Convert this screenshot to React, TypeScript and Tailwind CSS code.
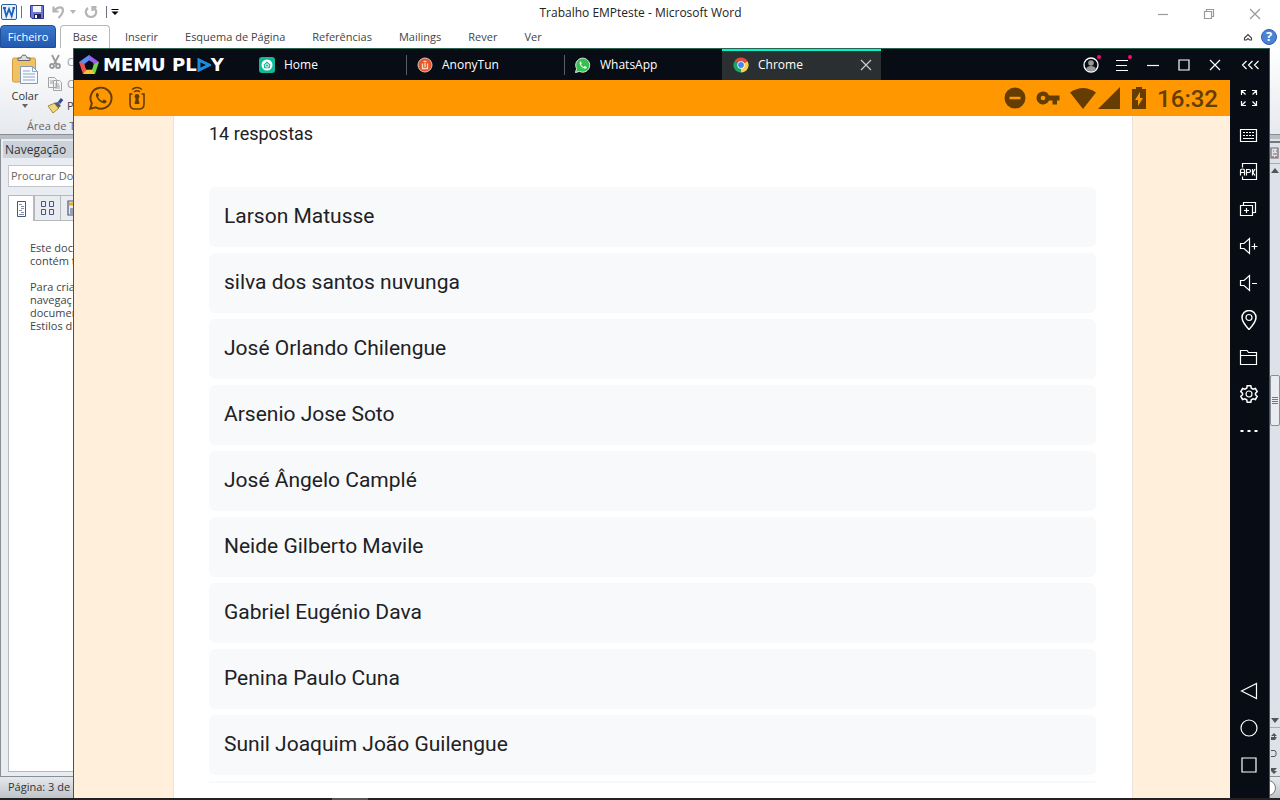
import React from "react";

const responses = [
  "Larson Matusse",
  "silva dos santos nuvunga",
  "José Orlando Chilengue",
  "Arsenio Jose Soto",
  "José Ângelo Camplé",
  "Neide Gilberto Mavile",
  "Gabriel Eugénio Dava",
  "Penina Paulo Cuna",
  "Sunil Joaquim João Guilengue",
];

const ribbonTabs = ["Inserir", "Esquema de Página", "Referências", "Mailings", "Rever", "Ver"];

type IconProps = { children: React.ReactNode; className?: string; box?: string };

function Line({ children, className = "size-5", box = "0 0 20 20" }: IconProps) {
  return (
    <svg viewBox={box} className={className} fill="none" stroke="currentColor" strokeWidth="1.2" aria-hidden="true">
      {children}
    </svg>
  );
}

function QuickAccess() {
  return (
    <div className="flex items-center">
      <svg viewBox="0 0 16 16" className="size-4" aria-hidden="true">
        <rect x="0.5" y="0.5" width="15" height="15" rx="1.5" fill="#e8f1fb" stroke="#2b5f9e" />
        <path d="M2 4h3M11.5 4H14M3.200 4 5.300 12 8 5l2.700 7L12.800 4" fill="none" stroke="#1d63b8" strokeWidth="1.8" />
      </svg>
      <span className="ml-1 h-3 w-px bg-gray-500" />
      <button aria-label="Guardar" className="ml-2">
        <svg viewBox="0 0 14 14" className="size-3.5" aria-hidden="true">
          <path d="M0.5 0.5h13v13H2l-1.5-1.5z" fill="#6d78d8" stroke="#2f3590" />
          <path d="M3 1h8v6H3z" fill="#f1f5fc" />
          <path d="M4 9h7v4H4z" fill="#20254f" />
          <path d="M5 10h2v3H5z" fill="#fff" />
        </svg>
      </button>
      <button aria-label="Anular" className="ml-2">
        <svg viewBox="0 0 14 14" className="size-3.5" fill="none" stroke="#b4b4b4" strokeWidth="2.2" aria-hidden="true">
          <path d="M1.500 1.500v5h5M2 6C6 1 11 1.500 11 5.500c0 3-2 5-4.500 7.500" />
        </svg>
      </button>
      <svg viewBox="0 0 6 4" className="ml-1 h-1 w-1.5" fill="#b4b4b4" aria-hidden="true"><path d="M0 0h6L3 4z" /></svg>
      <button aria-label="Repetir" className="ml-2">
        <svg viewBox="0 0 14 14" className="size-3.5" fill="none" stroke="#b4b4b4" strokeWidth="2.2" aria-hidden="true">
          <path d="M4 3C0 6 2 12 7 12s7-6 3-9M12.500 2H8.500v4" />
        </svg>
      </button>
      <span className="ml-2 h-3 w-px bg-gray-500" />
      <svg viewBox="0 0 7 6" className="ml-1 h-1.5 w-2" aria-hidden="true"><path d="M0 0h7v1H0zM0 2.500h7L3.500 6z" /></svg>
    </div>
  );
}

function WordHeader() {
  return (
    <header className="h-12 shrink-0 text-[#444]">
      <div className="grid h-6 grid-cols-[1fr_auto_1fr] items-center pl-px">
        <QuickAccess />
        <h1 className="pt-0.5 text-[12px] text-[#222]">Trabalho EMPteste - Microsoft Word</h1>
        <div className="flex justify-end gap-[34px] pt-1 pr-[19px] text-[#999]">
          <button aria-label="Minimizar o Word"><Line className="size-3" box="0 0 12 12"><path d="M1 6.500h10" /></Line></button>
          <button aria-label="Restaurar o Word"><Line className="size-3" box="0 0 12 12"><path d="M1.500 3.500h7v7h-7zM3.500 3.500v-2h7v7h-2" /></Line></button>
          <button aria-label="Fechar o Word"><Line className="size-3" box="0 0 12 12"><path d="m1 1 10 10M11 1 1 11" /></Line></button>
        </div>
      </div>
      <nav className="flex h-6 items-stretch pt-px text-[11px]">
        <button className="w-14 rounded-t-sm border border-[#1f4f9c] bg-linear-to-b from-[#3a78cc] to-[#2259b0] pt-px text-white">Ficheiro</button>
        <button className="ml-1 w-[50px] rounded-t-sm border border-b-0 border-[#b5b8bd] bg-white">Base</button>
        <div className="ml-[15px] flex gap-[27px] pt-0.5">
          {ribbonTabs.map((t) => <button key={t}>{t}</button>)}
        </div>
        <div className="ml-auto flex items-center gap-2 pr-[3px]">
          <button aria-label="Minimizar o friso">
            <Line className="size-[10px] text-[#444]" box="0 0 10 10"><path d="M1.500 6 5 2.500 8.500 6v2H6.500L5 6.500 3.500 8h-2z" /></Line>
          </button>
          <button className="size-4 rounded-full border border-[#2c5fb0] bg-[#4a83d4] text-[13px] leading-[13px] font-bold text-white">?</button>
        </div>
      </nav>
    </header>
  );
}

function Ribbon() {
  return (
    <section className="flex h-[87px] shrink-0 flex-col border-b border-[#8a8f96] bg-linear-to-b from-white to-[#e6e9ee]">
      <div className="flex h-[70px] w-[73px] gap-2 overflow-hidden pt-1.5 pl-[11px]">
        <button className="flex shrink-0 flex-col items-center text-[11px] text-[#333]">
          <svg viewBox="0 0 28 32" className="h-8 w-7" aria-hidden="true">
            <rect x="1.5" y="4" width="23" height="24" rx="1.5" fill="#f2c163" stroke="#d29a3e" />
            <path d="M7 6.500V4h3c0-4 6-4 6 0h3v2.500z" fill="#ddd" stroke="#666" />
            <path d="M9.500 12.500h12l5 5v12h-17z" fill="#f6faff" stroke="#8497b4" />
            <path d="M21.500 12.500v5h5M12 17h7M12 20h12M12 23h12M12 26h12" fill="none" stroke="#8fa5c6" />
          </svg>
          <span className="mt-0.5 leading-4">Colar</span>
          <svg viewBox="0 0 6 4" className="h-1 w-1.5" fill="#666" aria-hidden="true"><path d="M0 0h6L3 4z" /></svg>
        </button>
        <div className="flex flex-col gap-1.5 text-[11px] leading-4 text-[#9a9a9a]">
          <button className="flex gap-1">
            <svg viewBox="0 0 16 16" className="size-4" fill="none" stroke="#999" strokeWidth="1.8" aria-hidden="true">
              <path d="m5 1 4.500 9M12 1 7 10" /><circle cx="5" cy="12" r="2" /><circle cx="11" cy="12" r="2" />
            </svg>C
          </button>
          <button className="flex gap-1">
            <svg viewBox="0 0 16 16" className="size-4" fill="#f4f4f4" stroke="#a3a3a3" aria-hidden="true">
              <path d="M1.500 1.500h6l2 2v8h-8zM6.500 4.500h6l2 2v8h-8z" /><path d="M3 5h3M3 7h3M8 8h4M8 10h5M8 12h5" />
            </svg>C
          </button>
          <button className="flex gap-1 text-[#444]">
            <svg viewBox="0 0 16 16" className="size-4" aria-hidden="true">
              <path d="m1 8 7-3 4 5-6 5z" fill="#f1d877" stroke="#a38a42" /><path d="m7 5 4-1 3 4-3 2z" fill="#555d72" /><path d="m12 5 3-4" stroke="#3b4a91" strokeWidth="3" />
            </svg>P
          </button>
        </div>
      </div>
      <p className="pl-[27px] text-[11px] leading-4 text-[#666]">Área de T</p>
    </section>
  );
}

function NavigationPane() {
  return (
    <aside className="flex w-60 flex-col border-l border-[#8a8f96] bg-[#e9ecf1] text-[11px]">
      <h2 className="ml-0.5 mt-0.5 h-[17px] bg-[#ccd2da] pl-0.5 text-[12px] leading-[18px] text-[#333]">Navegação</h2>
      <input aria-label="Procurar Documento" placeholder="Procurar Do" className="mt-[7px] ml-[7px] h-[22px] border border-[#c3c7cd] bg-white px-0.5 pb-0.5 placeholder:text-[#666]" />
      <div className="mt-2 ml-[7px] flex h-[26px] text-[#46597c]">
        <button aria-label="Títulos" className="w-[26px] border border-b-0 border-[#b5b8bd] bg-white pl-[7px]">
          <svg viewBox="0 0 12 16" className="h-4 w-3" fill="none" aria-hidden="true">
            <path d="M1.500.5h8v15h-8z" stroke="#46597c" /><path d="M3 3.500h3M5 5.500h3M5 7.500h3M3 9.500h3M5 11.500h3M3 13.500h5" stroke="#7f8fae" />
          </svg>
        </button>
        <button aria-label="Páginas" className="w-[26px] border-y border-l border-[#b5b8bd] pl-[5px]">
          <svg viewBox="0 0 16 16" className="size-4" fill="none" stroke="currentColor" aria-hidden="true">
            <path d="M1.500 1.500h4v5h-4zM9.500 1.500h4v5h-4zM1.500 9.500h4v5h-4zM9.500 9.500h4v5h-4z" />
          </svg>
        </button>
        <button aria-label="Resultados" className="w-[26px] border border-[#b5b8bd] pl-1.5">
          <Line className="size-4" box="0 0 16 16"><path d="M1 1h12v14H1zM3 9h8M3 11h8M3 13h8" /><path d="M2 4h12" stroke="#e8ab22" strokeWidth="3" /></Line>
        </button>
      </div>
      <div className="mb-1 ml-[7px] grow border-b border-l border-[#b5b8bd] bg-white pt-5 pl-[21px] leading-[13px] whitespace-pre-line text-[#444]">
        {"Este doc\ncontém t\n\nPara cria\nnavegaç\ndocumen\nEstilos d"}
      </div>
    </aside>
  );
}

function WordScrollbar() {
  return (
    <div className="flex w-[11px] flex-col items-center bg-[#dde1e9] text-[#555]">
      <div className="mt-0.5 h-0.5 w-full bg-[#777]" />
      <Line className="mt-1 h-3 w-2.5 text-[#766]" box="0 0 10 12"><path d="M1 1h7v10H1zM3 4h1M6 4h1M3 7h4M3 9v2M6 9v2" /></Line>
      <div className="mt-1 h-px w-full bg-[#aaa]" />
      <svg viewBox="0 0 8 5" className="mt-1 h-[5px] w-2" fill="currentColor" aria-hidden="true"><path d="M4 0 8 5H0z" /></svg>
      <div className="mt-[202px] flex h-[51px] w-[10px] flex-col items-center justify-center gap-px rounded-xs border border-[#888f99] bg-[#e8ebf0]">
        <i className="h-px w-1.5 bg-[#777]" /><i className="h-px w-1.5 bg-[#777]" /><i className="h-px w-1.5 bg-[#777]" /><i className="h-px w-1.5 bg-[#777]" />
      </div>
      <svg viewBox="0 0 8 5" className="mt-auto h-[5px] w-2" fill="currentColor" aria-hidden="true"><path d="M0 0h8L4 5z" /></svg>
      <div className="mt-1 mb-1 h-px w-full bg-[#aaa]" />
      <svg viewBox="0 0 8 44" className="h-11 w-2" aria-hidden="true">
        <path d="M0 5h3V4H0l3-3 3 3H4v1h2L4 8H0zM0 36h6l-3 3h3l-3 3-3-3z" fill="currentColor" />
        <rect x="-3" y="18.500" width="8" height="6" rx="2" fill="none" stroke="currentColor" />
      </svg>
    </div>
  );
}

function MemuLogo() {
  return (
    <div className="flex w-[174px] items-center pl-1">
      <svg viewBox="0 0 22 22" className="size-[22px]" aria-hidden="true">
        <path d="M11 1 1 8l5 4 5-5.500 6 .5z" fill="#5a8cf5" />
        <path d="m11 1 10 7-5 5.500-1-5L11 6.500z" fill="#9b5cf0" />
        <path d="m21 8-4 12-7-4 4-.5 2-5.500z" fill="#6fd24a" />
        <path d="M17 20H5l1-7 2.500 2.500H14z" fill="#f5c52c" />
        <path d="M5 20 1 8l6 1.500-.5 2L8.500 16z" fill="#f0524f" />
        <path d="m11 6.500 4.500 3.500-1.700 5.500H8.200L6.500 10z" fill="#080c14" />
      </svg>
      <span className="ml-[3px] flex items-center font-['DejaVu_Sans'] text-[18px] leading-5 font-bold whitespace-pre text-white">
        MEMU PL
        <svg viewBox="0 0 14 14" className="size-3.5" aria-label="A"><path d="m2 2 10 5-10 5z" fill="none" stroke="#1b8ee0" strokeWidth="3" /></svg>
        Y
      </span>
    </div>
  );
}

const HomeIcon = (
  <svg viewBox="0 0 16 16" className="size-4" aria-hidden="true">
    <rect width="16" height="16" rx="3" fill="#12b898" />
    <circle cx="8" cy="8" r="5.5" fill="#fff" />
    <path d="M8 4.800 11.200 8H10.500v2.800h-5V8H4.800z" fill="#12b898" stroke="#12b898" strokeLinejoin="round" />
    <circle cx="8" cy="8.5" r="1.6" fill="#12b898" stroke="#fff" />
  </svg>
);
const TunIcon = (
  <svg viewBox="0 0 16 16" className="size-4" aria-hidden="true">
    <circle cx="8" cy="8" r="7" fill="#e5562b" stroke="#d9c6bc" />
    <path d="M5.500 6.500v5h5v-5M6.500 4.500h3M8 6v4" fill="none" stroke="#ffd9bd" strokeWidth="1.3" />
  </svg>
);
const phone = "M5.500 4.500c-1 .6-1.200 1.800-.4 3.200 1 1.900 2.300 3 4 3.700 1.300.5 2.200.1 2.500-.7l.1-.8-1.900-.9-.9 1c-1.300-.5-2.200-1.300-2.900-2.600l.7-.9-.7-1.900z";
const WhatsIcon = (
  <svg viewBox="0 0 16 16" className="size-4" aria-hidden="true">
    <path d="M.5 15.500 1.600 11.600A7 7 0 1 1 4.500 14.400z" fill="#32c24d" stroke="#e8e8e8" />
    <path d={phone} fill="#fff" />
  </svg>
);
const ChromeIcon = (
  <svg viewBox="0 0 16 16" className="size-4" aria-hidden="true">
    <path d="M8 8 1.500 4.200a7.500 7.500 0 0 1 13 0z" fill="#dd4b3e" />
    <path d="M8 8 1.500 4.200A7.500 7.500 0 0 0 8 15.500z" fill="#1da362" />
    <path d="M8 8V15.500A7.500 7.500 0 0 0 14.500 4.200z" fill="#fdd04b" />
    <circle cx="8" cy="8" r="3.7" fill="#fff" /><circle cx="8" cy="8" r="2.9" fill="#4285f4" />
  </svg>
);

const appTabs = [
  { name: "Home", icon: HomeIcon },
  { name: "AnonyTun", icon: TunIcon },
  { name: "WhatsApp", icon: WhatsIcon },
];

function TitleBar() {
  return (
    <div className="flex h-[31px] shrink-0 text-white">
      <MemuLogo />
      {appTabs.map((tab, i) => (
        <div key={tab.name} className="flex w-[158px] items-center">
          <span className={i === 0 ? "w-px" : "h-5 w-px bg-[#5a5f64]"} />
          <button className="flex items-center gap-[9px] pl-[10px] text-[12px]">{tab.icon}{tab.name}</button>
        </div>
      ))}
      <div className="flex w-[159px] items-center justify-between border-t-2 border-[#00f5c8] bg-[#2a2f32] pr-[9px] pb-0.5 pl-[11px]">
        <button className="flex items-center gap-[9px] text-[12px]">{ChromeIcon}Chrome</button>
        <button aria-label="Fechar Chrome" className="text-[#ccc]"><Line className="size-3" box="0 0 12 12"><path d="m1 1 10 10M11 1 1 11" /></Line></button>
      </div>
      <div className="ml-auto grid grid-cols-[repeat(5,31px)_39px] place-items-center">
        <button aria-label="Conta" className="relative">
          <svg viewBox="0 0 16 16" className="size-4" aria-hidden="true"><circle cx="8" cy="8" r="7" fill="#080c14" stroke="#fff" strokeWidth="1.3" /><circle cx="8" cy="6" r="2.8" fill="#999" /><path d="M3 12c1-4 9-4 10 0-2 3-8 3-10 0z" fill="#999" /></svg>
          <i className="absolute -top-0.5 -right-0.5 size-1 rounded-full bg-[#ff0a6c]" />
        </button>
        <button aria-label="Menu" className="relative">
          <Line className="size-4" box="0 0 16 16"><path d="M2 3.500h12M2 8.500h11M2 13.500h12" /></Line>
          <i className="absolute -top-0.5 -right-0.5 size-1 rounded-full bg-[#ff0a6c]" />
        </button>
        <button aria-label="Minimizar"><Line className="size-3" box="0 0 12 12"><path d="M0 6.500h12" /></Line></button>
        <button aria-label="Maximizar"><Line className="size-3" box="0 0 12 12"><path d="M1 1h10v10H1z" /></Line></button>
        <button aria-label="Fechar"><Line className="size-3" box="0 0 12 12"><path d="m1 1 10 10M11 1 1 11" /></Line></button>
        <button aria-label="Recolher barra"><Line className="h-2.5 w-[18px]" box="0 0 18 10"><path d="M5.500 1 1.500 5l4 4M11.500 1l-4 4 4 4M17.500 1l-4 4 4 4" /></Line></button>
      </div>
    </div>
  );
}

function AndroidStatus() {
  return (
    <div className="flex h-9 shrink-0 items-center bg-[#ff9800] pr-3 pl-[15px] text-[#663d00]">
      <svg viewBox="0 0 16 16" className="size-6" fill="none" stroke="currentColor" strokeWidth="1.3" aria-hidden="true">
        <path d="M.8 15.200 1.900 11.500A7 7 0 1 1 4.600 14.200z" /><path d={phone} fill="currentColor" stroke="none" />
      </svg>
      <svg viewBox="0 0 18 24" className="ml-[15px] h-6 w-[18px]" fill="none" stroke="currentColor" strokeWidth="1.6" aria-hidden="true">
        <path d="M4.500 8H2v10q0 5 5 5h4q5 0 5-5V8h-2.500M4 3.500q5-4 10 0M6 6q3-2.500 6 0" />
        <circle cx="9" cy="10.5" r="2.4" fill="currentColor" stroke="none" /><path d="M8 11h2l1.500 7h-5z" fill="currentColor" stroke="none" />
      </svg>
      <div className="ml-auto flex items-center">
        <svg viewBox="0 0 22 22" className="size-[22px]" fill="currentColor" aria-hidden="true"><path fillRule="evenodd" d="M11 .5a10.500 10.500 0 1 0 0 21 10.500 10.500 0 0 0 0-21zM5.500 9.700h11v2.600h-11z" /></svg>
        <svg viewBox="0 0 24 14" className="ml-2.5 h-3.5 w-6" fill="currentColor" aria-hidden="true"><path fillRule="evenodd" d="M7 .5a6.500 6.500 0 1 0 6 9h3.500v4H21v-4h2.500v-5H13a6.500 6.500 0 0 0-6-4zm0 4.200a2.300 2.300 0 1 1 0 4.600 2.300 2.300 0 0 1 0-4.600z" /></svg>
        <svg viewBox="0 0 26 21" className="ml-2.5 h-[21px] w-[26px]" fill="currentColor" aria-hidden="true"><path d="M0 4.500q13-9 26 0L13 21z" /></svg>
        <svg viewBox="0 0 22 22" className="ml-0.5 size-[22px]" fill="currentColor" aria-hidden="true"><path d="M22 0v22H0z" /></svg>
        <svg viewBox="0 0 14 22" className="ml-3 h-[22px] w-3.5" fill="currentColor" aria-hidden="true"><path fillRule="evenodd" d="M4 0h6v2h4v20H0V2h4zM8 5 3 13h3v6l5-8H8z" /></svg>
        <time className="ml-[11px] pt-0.5 font-[Roboto] text-[24px] leading-9 font-medium">16:32</time>
      </div>
    </div>
  );
}

const sideTools = [
  { label: "Ecrã inteiro", art: <path d="M2.500 7V2.500H7M2.500 2.500l4 4M13 2.500h4.500V7M17.500 2.500l-4 4M2.500 13v4.500H7M2.500 17.500l4-4M17.500 13v4.500H13M17.500 17.500l-4-4" /> },
  { label: "Teclado", art: <path d="M1.500 4.500h16v12h-16zM4 7.500h2M7 7.500h2M10 7.500h2M13 7.500h2M4 10.500h2M7 10.500h2M10 10.500h2M13 10.500h2M4 13.500h11" /> },
  { label: "Instalar APK", art: <path d="M3.500 5.500v-4h14v16h-14v-3M1.500 13.500V9q0-2 2-2t2 2v4.500M1.500 10.500h4M7.500 13.500v-6H10q1.500 0 1.500 1.500T10 10.500H7.500M13.500 7v6.500M16 7l-2 3.500 2 3" /> },
  { label: "Múltiplas instâncias", art: <path d="M1.500 6.500h12v10h-12zM4.500 6.500v-3h12v10h-3M7.500 9v5M5 11.500h5" /> },
  { label: "Aumentar volume", art: <path d="M1.500 7.500H5l5.500-5v15L5 12.500H1.500zM12.500 10.500h6M15.500 7.500v6" /> },
  { label: "Diminuir volume", art: <path d="M1.500 7.500H5l5.500-5v15L5 12.500H1.500zM13 10.500h5" /> },
  { label: "Localização", art: <><path d="M10 19.500Q3 12 3 7.500a7 7 0 0 1 14 0Q17 12 10 19.500z" strokeWidth="1.5" /><circle cx="10" cy="7.5" r="3" /></> },
  { label: "Ficheiros", art: <path d="M1.500 17.500v-14H8l1.500 2h8v12zM1.500 8.500h16" /> },
  { label: "Definições", art: <><path strokeWidth="1.5" d="M8.200 1.800h3.600l.5 2.400 1.800 1 2.300-.7 1.800 3.100-1.700 1.700v1.400l1.700 1.700-1.800 3.100-2.300-.7-1.800 1-.5 2.400H8.200l-.5-2.400-1.800-1-2.300.7-1.800-3.100 1.700-1.700V9.300L1.800 7.600l1.800-3.100 2.300.7 1.800-1z" /><circle cx="10" cy="10" r="3" /></> },
  { label: "Mais", art: <path d="M1.500 10h3M8.500 10h3M15.500 10h3" strokeWidth="2" /> },
];

const systemKeys = [
  { label: "Voltar", art: <path d="M2.500 10 17.500 2.500v15z" /> },
  { label: "Início", art: <circle cx="10" cy="10" r="8" /> },
  { label: "Recentes", art: <path d="M3 3h14v14H3z" /> },
];

function ToolSidebar() {
  return (
    <div className="flex w-[39px] shrink-0 flex-col justify-between pr-px pb-3.5 text-white">
      <div className="flex flex-col">
        {sideTools.map((t) => <button key={t.label} aria-label={t.label} className="flex h-[37px] items-center justify-center pb-px"><Line>{t.art}</Line></button>)}
      </div>
      <div className="flex flex-col">
        {systemKeys.map((t) => <button key={t.label} aria-label={t.label} className="flex h-[37px] items-center justify-center pb-px"><Line>{t.art}</Line></button>)}
      </div>
    </div>
  );
}

function EmulatorWindow() {
  return (
    <div className="absolute top-12 right-[10px] bottom-0.5 left-[73px] flex flex-col border border-b-0 border-[#2c6350] bg-[#080c14]">
      <TitleBar />
      <div className="flex min-h-0 grow">
        <div className="flex min-w-0 grow flex-col">
          <AndroidStatus />
          <main className="min-h-0 grow overflow-hidden bg-[#ffefdb] pr-[97px] pl-[99px] font-[Roboto] text-[#202124]">
            <section className="h-full border-x border-[#ebe3da] bg-white pr-9 pl-[35px]">
              <p className="pt-1.5 text-[18px] leading-6">14 respostas</p>
              <ul className="mt-[41px] flex flex-col gap-1.5 text-[21px]">
                {responses.map((name) => <li key={name} className="flex h-[60px] items-center rounded-md bg-[#f8f9fa] px-[15px]">{name}</li>)}
                <li className="h-0.5 rounded-md bg-[#f8f9fa]" />
              </ul>
            </section>
          </main>
        </div>
        <ToolSidebar />
      </div>
    </div>
  );
}

export default function App() {
  return (
    <div className="relative flex h-screen flex-col overflow-hidden bg-white font-['Open_Sans',sans-serif]">
      <WordHeader />
      <Ribbon />
      <div className="flex min-h-0 grow justify-between border-t-4 border-[#b9bec6] bg-[#dde1e9]">
        <NavigationPane />
        <WordScrollbar />
      </div>
      <footer className="flex h-[22px] shrink-0 items-center justify-between border-t border-[#8a8f96] bg-linear-to-b from-[#e6e9ed] to-[#bfc4cb] pl-2 text-[11px] text-[#333]">
        <span>Página: 3 de</span>
        <span className="mr-1 flex size-4 items-center justify-center rounded-full border border-[#777] bg-white leading-none">-</span>
      </footer>
      <div className="h-0.5 shrink-0 bg-[#222] pl-[332px]"><div className="h-full w-9 bg-[#555]" /></div>
      <EmulatorWindow />
    </div>
  );
}
